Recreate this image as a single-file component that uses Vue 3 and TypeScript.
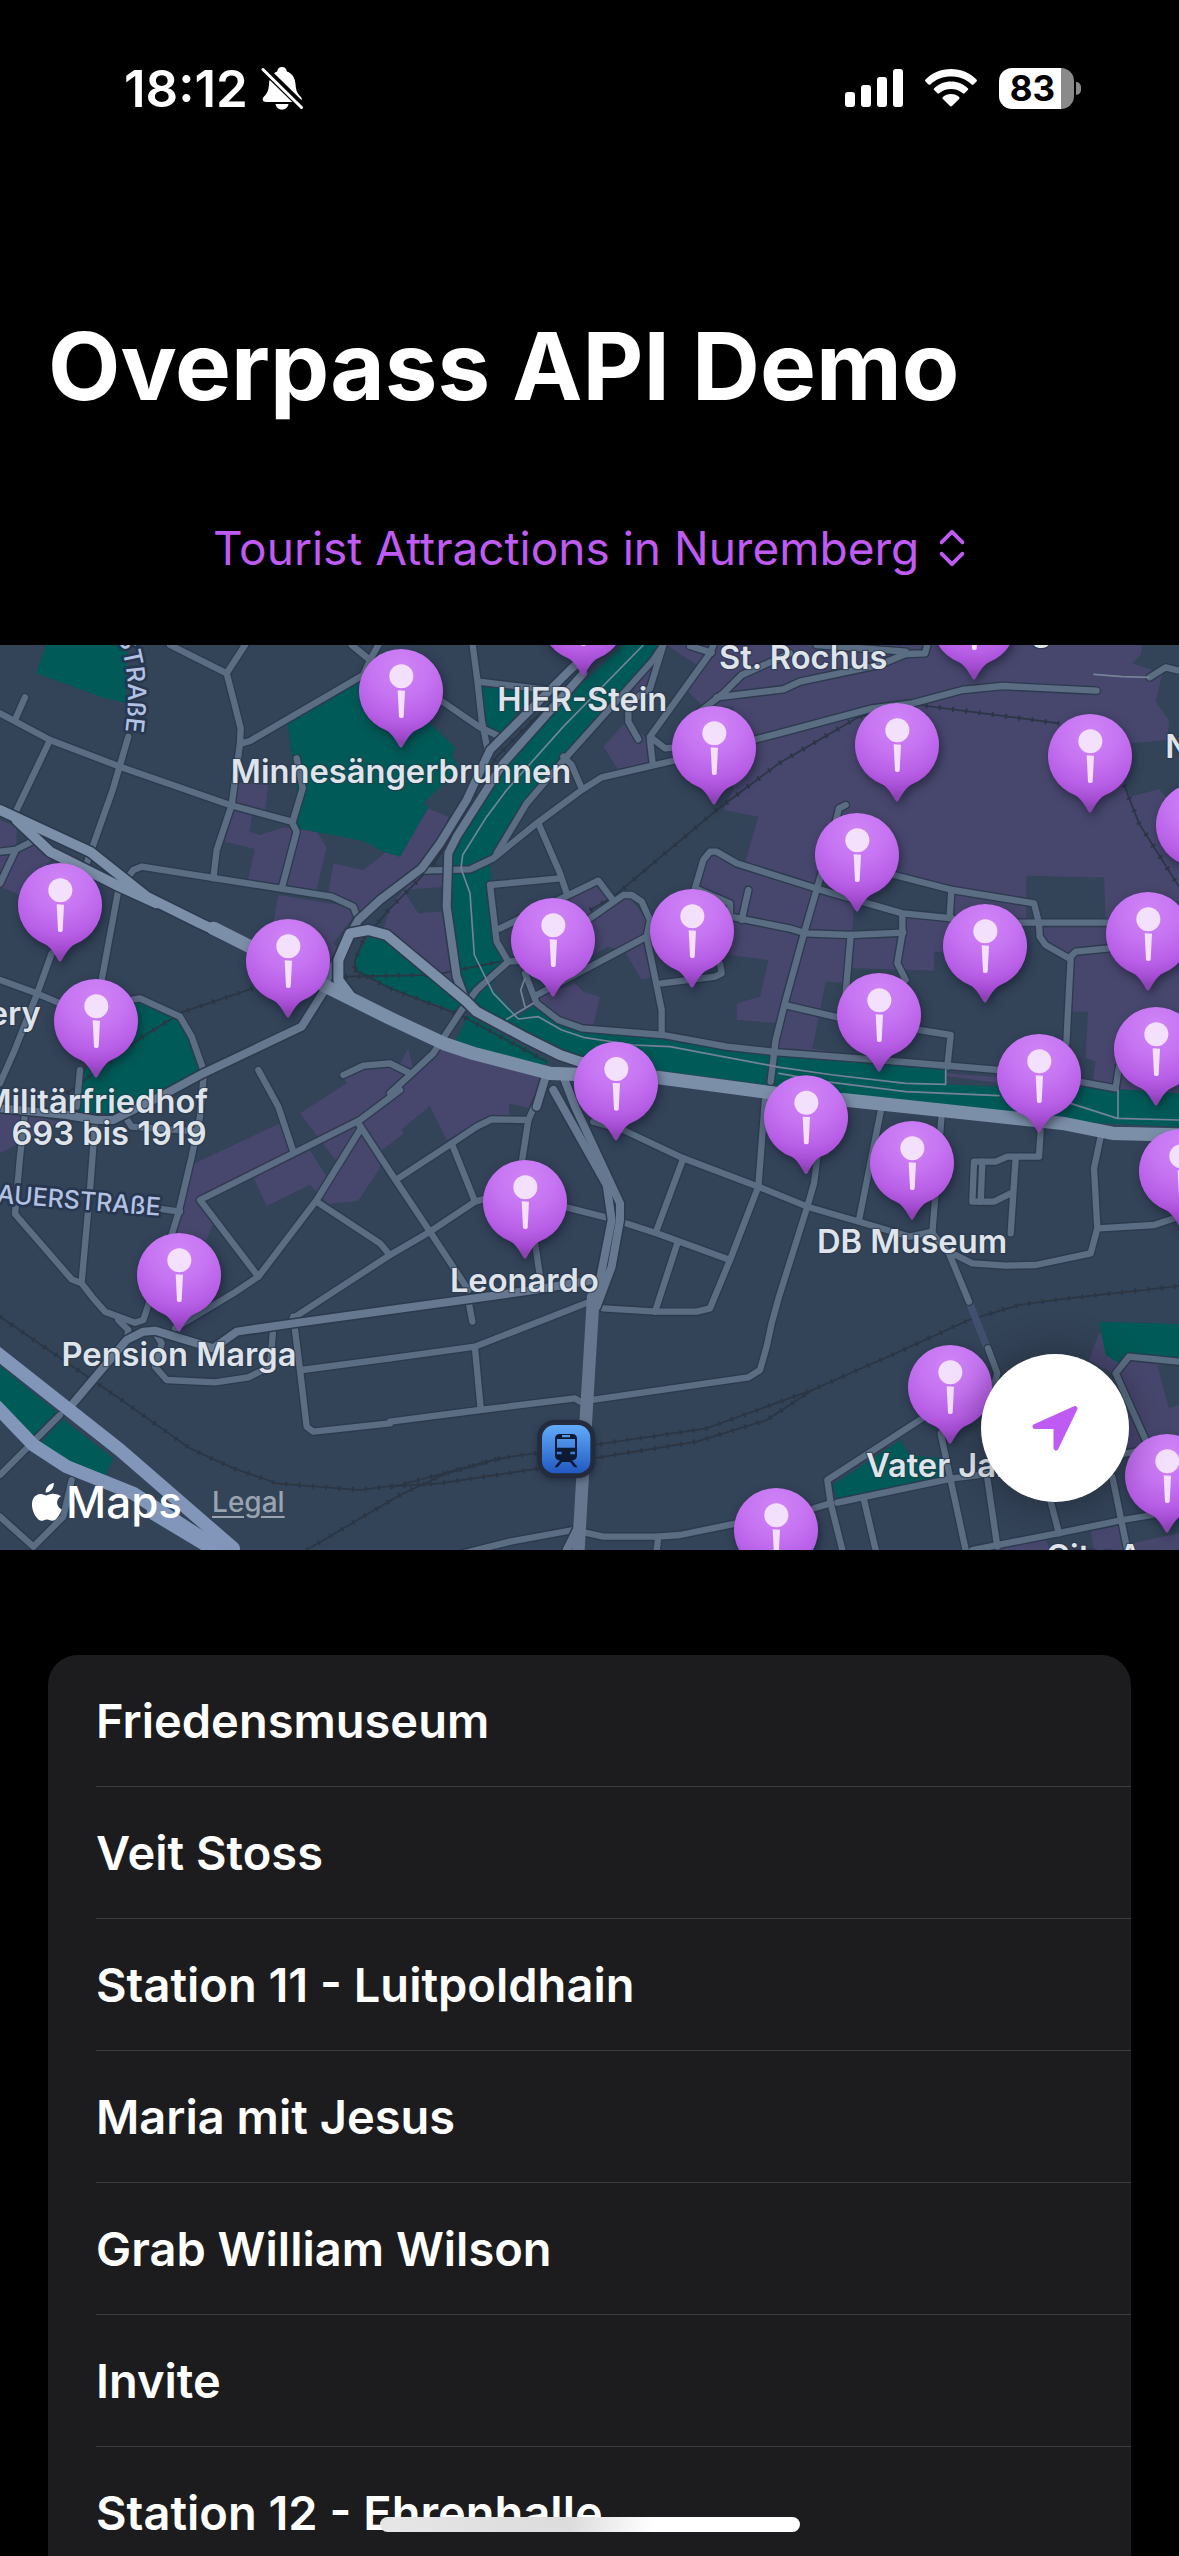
<script setup lang="ts">
import { ref } from 'vue'

interface Tile {
  x: number
  y: number
  paths: string[]
}

interface Label {
  text: string
  x: number
  y: number
  anchor: 'start' | 'middle' | 'end'
}

const categories: string[] = ['Tourist Attractions in Nuremberg']
const category = ref<string>(categories[0])

const places: string[] = [
  'Friedensmuseum',
  'Veit Stoss',
  'Station 11 - Luitpoldhain',
  'Maria mit Jesus',
  'Grab William Wilson',
  'Invite',
  'Station 12 - Ehrenhalle',
]

// Built-up quarters
const districts: string[] = [
  '0,540 50,560 50,620 100,600 160,650 60,765 0,740',
  '714,428 805,435 795,512 755,530 748,575 780,585 850,562 950,575 980,622 948,755 835,740 743,722 765,627 675,605',
  '835,765 1050,800 1060,830 1000,910 1020,930 990,1000 820,850',
  '1000,670 1090,690 1160,635 1200,650 1285,505 1345,530 1320,610 1250,690 1080,850 985,760',
  '1170,800 1210,750 1265,700 1335,700 1345,900 1370,1040 1150,870',
  '900,1420 1040,1330 1030,1310 1090,1275 1200,1270 1225,1225 1240,1290 1300,1250 1340,1200 1640,1300 1590,1405 1527,1390 1527,1430 1480,1430 1340,1500 1290,1398 1205,1468 1212,1480 1140,1535 1140,1585 1075,1682 985,1692 930,1635 800,1698 760,1612 930,1530 980,1610 1010,1565',
  '580,1572 840,1450 870,1540 600,1680 640,1750 620,1800 520,1790',
  '0,1420 90,1425 180,1445 0,1540',
  '2000,15 2090,75 2065,155 2105,195 2200,200 2200,450 2170,510 2275,530 2235,670 2130,635 2100,680 2085,750 2200,790 2190,945 2305,960 2280,1070 2210,1090 2210,1140 2330,1150 2320,1240 3537,1400 3537,15',
  '1810,320 1875,248 1950,300 1960,370 1855,390',
  '1910,120 1980,50 1960,150 1885,230',
  '1690,780 1795,720 1835,780 1770,835',
  '1770,840 1885,765 1940,840 1940,890 1960,1010 1925,1020 1875,935 1825,920 1730,970',
  '1725,1030 1750,1055 1800,1070 1780,1155 1740,1160 1660,1125 1610,1075',
  '3297,2080 3267,2160 3337,2200 3387,2440 3427,2410 3537,2400 3537,2170',
  '3272,2675 3362,2655 3382,2730 3282,2730',
  '3397,2710 3537,2680 3537,2730 3397,2730',
  '2997,2725 3137,2700 3152,2730 2997,2730',
]

// Open blocks inside the quarters
const blocks: string[] = [
  '1210,750 1255,820 1340,812 1335,740',
  '3427,15 3422,45 3397,70 3487,100 3467,185 3507,240 3502,300 3395,310 3372,440 3392,470 3477,447 3537,520 3537,15',
  '3079,707 3312,713 3317,850 3079,850',
  '2802,935 2837,935 3077,850 3117,850 3127,910 3207,960 3217,1115 3264,1115 3257,1255 3287,1265 3277,1330 2837,1300 2437,1225 2477,1025 2547,1030 2552,985 2802,992',
  '2697,710 2847,750 2842,830 2707,815 2557,785 2472,745 2467,720',
  '2562,790 2702,820 2702,880 2557,870',
  '3472,2175 3537,2175 3537,2295 3507,2305',
]

const parks: string[] = [
  '137,15 109,100 310,173 378,188 385,15',
  '863,250 1090,120 1200,100 1290,250 1367,325 1355,345 1378,385 1270,490 1285,500 1200,650 1150,635 1090,603 890,565 888,450',
  '390,1085 415,1080 540,1130 612,1300 470,1370 380,1425 230,1415 250,1290 330,1230',
  '1870,15 1990,15 1670,380 1480,640 1470,680 1490,900 1525,965 1470,1040 1490,1060 1555,1130 1610,1090 1750,1170 1990,1190 2337,1245 2837,1290 2837,1333 3000,1340 3247,1340 3537,1360 3537,1460 3200,1445 2900,1400 2500,1360 1970,1290 1740,1250 1430,1100 1380,1020 1340,800 1345,650 1470,450 1620,250',
  '1110,885 1170,880 1400,1100 1370,1115 1170,1045 1070,990 1065,950',
  '1405,1125 1650,1265 1600,1290 1365,1205',
  '1445,140 1600,155 1500,290 1445,250',
  '3297,2045 3537,2052 3537,2170 3387,2150 3357,2170 3317,2145',
  '2497,2535 2702,2400 2727,2445 2827,2455 2842,2515 2512,2580',
  '0,2178 170,2315 100,2390 0,2295',
  '188,2338 340,2455 310,2520 120,2410',
]

const streets: Tile[] = [
  {
    x: 0,
    y: 0,
    paths: [
      'M0,220 L150,300 360,380 690,495 875,545 890,575 845,745',
      'M45,240 L75,172',
      'M150,300 L45,520',
      'M385,290 L338,450 260,670',
      'M355,750 L305,1020',
      'M155,940 L110,1065 40,1240 0,1330',
      'M0,1020 L110,1060 180,1090',
      'M510,15 L680,100 735,15',
      'M680,100 L722,265 720,310 695,495 650,630 640,715',
      'M725,310 L750,303 1090,105 1110,60 1055,15',
      'M1110,60 L1135,15',
      'M890,355 L908,445 878,545',
      'M385,710 L400,690 425,680 995,770 1060,800 1075,840',
      'M0,635 L45,630 105,600',
      'M45,635 L0,730',
      'M390,1080 L420,1075 540,1130 575,1190 612,1295 600,1430 575,1550 535,1720 510,1800 440,2010 430,2040 405,2048 315,2015 280,1975 245,1930 215,1918 45,1722 60,1550 75,1420',
      'M240,1290 L230,1400',
      'M775,1290 L835,1400 880,1535',
      'M1030,1305 L1090,1277 1170,1270 1230,1300',
    ],
  },
  {
    x: 1170,
    y: 0,
    paths: [
      'M248,15 L262,120 275,240 295,340',
      'M265,125 L460,148',
      'M150,180 L270,262 330,290',
      'M820,15 L790,60 530,350 410,490 350,590 320,640',
      'M820,15 L780,145 715,190 715,245 745,298',
      'M95,692 L240,688 310,655 440,550 575,450 635,412 860,360',
      'M520,350 L545,375 575,445',
      'M970,15 L960,40 780,290 825,325 860,322',
      'M780,300 L788,370',
      'M900,18 L965,38',
      'M930,215 L1000,160 1055,105 1200,40',
      'M980,172 L1180,148 1230,125 1467,75 1547,42 1605,40 1612,15',
      'M1280,15 L1547,35',
      'M1097,298 L1167,280 1447,205 1567,190 1717,150 1837,138 2120,152',
      'M445,550 L510,700 530,760',
      'M300,735 L510,715',
      'M300,735 L320,905 355,965 420,960',
      'M330,865 L625,722 665,775',
      'M600,835 L700,765 725,765 755,785 780,840 770,890 815,1110 815,1180',
      'M440,1065 L770,890',
      'M355,965 L260,1050 215,1110 130,1240 60,1305 0,1360',
      'M405,1000 L440,1090 505,1140 575,1165 820,1185 1010,1220 1165,1237 1467,1260 1827,1290',
      'M915,745 L940,660 960,635 980,635 1040,670 1167,710 1277,745 1537,820 1687,835',
      'M915,745 L1020,790 1020,830 1197,865 1247,880 1382,885 1540,878',
      'M1075,750 L1055,840',
      'M815,1030 L975,1010 995,1000 990,970',
    ],
  },
  {
    x: 2337,
    y: 0,
    paths: [
      'M370,825 L370,880 355,970 380,1020',
      'M345,705 L520,750 765,790 780,850 782,890 800,915 870,955 890,935 990,925',
      'M875,955 L862,1210',
      'M720,848 L990,848',
      'M517,750 L512,835',
      'M130,690 L75,880 20,1080 -10,1200 -25,1325',
      'M215,885 L200,1060',
      'M25,1097 L180,1133',
      'M420,1170 L515,1185 505,1280',
      'M200,495 L180,505 170,545',
      'M900,1325 L1010,1345 1020,1280',
      'M1112,112 L1160,82 1200,92',
    ],
  },
  {
    x: 0,
    y: 1350,
    paths: [
      'M285,100 L270,300 245,575',
      'M375,80 L395,110 600,125',
      'M470,355 L540,365',
      'M880,680 L900,840 920,1010 940,1025 1170,1000',
      'M905,840 L1170,805',
      'M878,685 L1170,495',
      'M525,715 L700,610 775,560 600,330 1080,90 1200,0',
      'M775,560 L950,330 1080,120',
      'M950,335 L1140,460 1165,490',
      'M380,750 L385,720 355,690',
      'M470,735 L485,760 465,830 500,870 645,877 745,862 810,830 820,710',
      'M215,1170 L190,1280 100,1370 0,1280',
      'M0,1155 L180,975',
    ],
  },
  {
    x: 1170,
    y: 1350,
    paths: [
      'M20,268 L185,160 260,110 305,88 415,90',
      'M185,160 L255,335',
      'M0,495 L120,425 255,335 290,325',
      'M-95,100 L10,260 120,425 235,600',
      'M235,630 L247,695',
      'M455,0 L415,90 395,220',
      'M520,350 L660,385 800,430 1020,510',
      'M435,460 L450,560',
      'M0,805 L255,770 600,635',
      'M255,775 L272,955',
      'M0,995 L270,960 555,925 570,935 1075,862 1110,840 1130,770 1145,700 1167,620 1252,350 1272,280 1282,200',
      'M640,655 L800,665 920,665 960,655 1020,510 1105,290 1125,30',
      'M795,665 L862,460',
      'M800,420 L880,205',
      'M610,95 L700,120 880,205 1105,290 1252,350 1407,395 1560,440 1627,425',
      'M200,1395 L360,1355 550,1320 640,1340 800,1340 870,1335 1040,1300',
      'M805,1340 L800,1380',
    ],
  },
  {
    x: 2337,
    y: 1350,
    paths: [
      'M305,65 L240,390',
      'M487,85 L460,430 510,490 570,635',
      'M627,775 L655,850 640,900',
      'M500,480 L580,520 680,527 770,525 935,490 955,415 945,235 965,140',
      'M960,415 L1125,405 1200,380',
      'M785,120 L780,200 685,200 650,215 585,215 580,335 645,335 695,310',
      'M710,205 L695,430',
      'M610,215 L605,335',
      'M430,985 L145,1170 155,1240 190,1380',
      'M105,1255 L155,1240',
      'M175,1238 L520,1165 640,1150',
      'M485,1030 L560,1380',
      'M255,1230 L290,1380',
      'M625,1165 L655,1370',
      'M580,1380 L835,1330 1030,1290 1120,1275',
      'M815,1235 L840,1330',
      'M1000,1160 L1045,1380',
      'M1200,815 L1050,800 1010,850 1100,1050',
      'M1030,1092 L1070,1085',
    ],
  },
]

const avenues: string[] = [
  'M0,1405 L200,1425 290,1440 340,1440 480,1370 610,1300 905,1160 980,1040',
  'M980,1020 L1030,920 1075,840 1140,780 1265,685 1320,610 1400,480 1470,330 1710,90 1790,15',
  'M1750,100 L1510,370 1370,590 1345,640 1340,800 1370,1010 1400,1090 1430,1110',
  'M1660,1350 L1820,1635 1835,1740 1790,1970',
  'M1690,1310 L1725,1400 1860,1690 1860,1740 1835,1880 1790,2000',
  'M1640,1300 L1610,1400',
  'M215,2295 L380,2100 430,2075 465,2072 640,2125 710,2075 880,2050 1170,2010 1405,1978 1600,1950 1780,1920',
  'M1735,2660 L1700,2730',
]

const boulevards: string[] = ['M1780,1970 L1760,2300 1735,2730']

const arterials: string[] = [
  'M0,510 L270,635 440,770 600,850 740,915',
  'M50,540 L150,635 360,740 470,790',
  'M1060,1080 L1015,1020 1015,960 1050,880 1105,870 1160,885 1400,1085 1430,1115 1570,1190 1680,1245 1740,1265 1970,1310',
]

const trunks: string[] = [
  'M640,865 L760,925',
  'M970,1035 L1060,1080 1170,1135 1330,1210 1420,1240 1650,1300 1970,1312 2400,1370 2537,1380 3187,1450 3337,1480 3537,1485',
]

const motorways: string[] = [
  'M-10,2138 L360,2430 700,2725',
  'M-10,2300 L100,2415 200,2480 400,2560 600,2690 680,2750',
  'M460,2620 L660,2740',
]

const rails: string[] = [
  'M200,1360 L420,1195 550,1115 760,1045',
  'M1035,1010 L1300,1005 1500,965',
  'M1065,990 L1170,1045 1380,1125 1640,1265',
  'M1065,985 L1065,960 1090,900 1170,805 1260,715 1310,660 1400,500 1490,350 1740,100',
  'M1770,810 L1840,770 2150,510 2337,370 2577,230 2757,195 3177,250',
  'M3372,435 L3417,550 3537,740',
  'M0,2030 L350,2270 570,2425 700,2485 830,2530 1080,2550 1200,2535 1500,2455 1780,2415 2120,2365 2437,2250 2687,2140 2907,2040 3057,1995 3177,1978 3537,1938',
  'M920,2730 L1200,2565 1340,2500 1500,2455',
  'M1170,2540 L1320,2530 1620,2485 1780,2455 2090,2405 2300,2340 2437,2250',
]

const footpaths: string[] = [
  'M1930,15 L1690,260 1520,450 1460,530 1388,645 1383,685 1410,760 1423,945 1480,1060 1555,1137 1615,1130 1685,1170 1750,1192 1900,1215 2010,1220 2340,1282 2500,1305 2717,1330 2837,1333 2837,1290',
  'M2337,1300 L2477,1325 2717,1355 2997,1367',
  'M1575,1015 L1562,1050 1575,1100',
  'M1520,1138 L1600,1090',
  'M3212,1390 L3352,1435 3537,1440',
  'M3354,1350 L3354,1435',
  'M3282,103 L3367,110 3447,112',
]

const labels: Label[] = [
  { text: 'Minnesängerbrunnen', x: 1203, y: 428, anchor: 'middle' },
  { text: 'HIER-Stein', x: 1747, y: 213, anchor: 'middle' },
  { text: 'St. Rochus', x: 2410, y: 86, anchor: 'middle' },
  { text: 'Burg', x: 3155, y: 2, anchor: 'end' },
  { text: 'N', x: 3496, y: 355, anchor: 'start' },
  { text: 'ery', x: 122, y: 1155, anchor: 'end' },
  { text: 'Militärfriedhof', x: 624, y: 1418, anchor: 'end' },
  { text: '693 bis 1919', x: 620, y: 1515, anchor: 'end' },
  { text: 'Pension Marga', x: 537, y: 2179, anchor: 'middle' },
  { text: 'Leonardo', x: 1573, y: 1957, anchor: 'middle' },
  { text: 'DB Museum', x: 2736, y: 1838, anchor: 'middle' },
  { text: 'Vater Jakob', x: 2598, y: 2512, anchor: 'start' },
  { text: 'City A', x: 3138, y: 2785, anchor: 'start' },
]

const pins: [number, number][] = [
  [2922, -51], [1749, -63], [1203, 153], [2691, 315], [2142, 324], [3270, 348],
  [3594, 555], [2571, 645], [180, 795], [2076, 873], [3444, 882], [1659, 900],
  [2955, 918], [864, 963], [2637, 1125], [288, 1143], [3468, 1227], [3117, 1308],
  [1848, 1331], [2418, 1432], [2736, 1569], [3543, 1593], [1575, 1686], [537, 1905],
  [2850, 2241], [3501, 2508], [2328, 2670],
]
</script>

<template>
  <div class="screen">
    <header class="status">
      <div class="status-left">
        <time>18:12</time>
        <svg class="bell" viewBox="0 0 44 44" aria-label="Silent mode">
          <path
            fill="#fff"
            d="M22 1c3 0 4.500 1.800 4.800 4.500C32.500 7.500 35 12 35.500 18c.4 7 2 9.500 5 12.500 2.500 2.600 1 5.500-2 5.500H6c-3 0-4.500-2.900-2-5.500 3-3 4.600-5.500 5-12.500C9.500 12 12 7.500 17.200 5.500 17.500 2.800 19 1 22 1zM15.500 38h13c-.5 3.500-3.200 5.500-6.500 5.500S16 41.500 15.500 38z"
          />
          <path d="M3 2 43 41" stroke="#000" stroke-width="8" />
          <path d="M3 3.500 41.500 41.500" stroke="#fff" stroke-width="3" stroke-linecap="round" />
        </svg>
      </div>
      <div class="status-right">
        <svg class="signal" viewBox="0 0 58 38" aria-label="Signal">
          <g fill="#fff">
            <rect x="0" y="23" width="10" height="15" rx="3" />
            <rect x="16" y="16" width="10" height="22" rx="3" />
            <rect x="32" y="8" width="10" height="30" rx="3" />
            <rect x="48" y="0" width="10" height="38" rx="3" />
          </g>
        </svg>
        <svg class="wifi" viewBox="0 0 52 38" aria-label="Wi-Fi">
          <g fill="#fff">
            <path d="M26 0C36 0 45 4 51.500 10.500c.6.600.6 1.300 0 1.900l-3 3c-.6.600-1.300.600-1.900 0C41 10 34 7.500 26 7.500S11 10 5.400 15.400c-.6.600-1.300.600-1.900 0l-3-3c-.6-.6-.6-1.300 0-1.900C7 4 16 0 26 0z" />
            <path d="M26 12.500c6.600 0 12.500 2.600 16.800 6.700.6.600.6 1.300 0 1.900l-3.200 3.200c-.6.600-1.200.6-1.800 0C34.600 21.500 30.500 20 26 20s-8.600 1.500-11.800 4.300c-.6.600-1.200.6-1.800 0l-3.200-3.200c-.6-.6-.6-1.300 0-1.900 4.300-4.100 10.200-6.700 16.800-6.700z" />
            <path d="M26 25c3.200 0 6 1.200 8.100 3.100.6.600.6 1.200 0 1.800l-7.100 7.200c-.6.600-1.400.6-2 0l-7.100-7.200c-.6-.6-.6-1.200 0-1.800C20 26.200 22.800 25 26 25z" />
          </g>
        </svg>
        <div class="battery">
          <span class="battery-body">83</span>
          <span class="battery-cap"></span>
        </div>
      </div>
    </header>

    <h1 class="title">Overpass API Demo</h1>

    <div class="picker">
      <select v-model="category" aria-label="Category">
        <option v-for="c in categories" :key="c" :value="c">{{ c }}</option>
      </select>
      <svg viewBox="0 0 28 40" aria-hidden="true">
        <path d="M3 14 14 3 25 14M3 26 14 37 25 26" fill="none" stroke="#bf5af2" stroke-width="4" stroke-linecap="round" stroke-linejoin="round" />
      </svg>
    </div>

    <section class="map" aria-label="Map">
      <svg class="canvas" viewBox="0 15 3537 2715" preserveAspectRatio="xMidYMid slice">
        <defs>
          <radialGradient id="pin-fill" gradientUnits="userSpaceOnUse" cx="0" cy="-70" r="225">
            <stop offset="0" stop-color="#cf84f6" />
            <stop offset="0.400" stop-color="#c674f2" />
            <stop offset="0.720" stop-color="#b75ee6" />
            <stop offset="0.900" stop-color="#a34bd0" />
            <stop offset="1" stop-color="#8c43b2" />
          </radialGradient>
          <linearGradient id="station-fill" x1="0" y1="0" x2="0" y2="1">
            <stop offset="0" stop-color="#63abfa" />
            <stop offset="1" stop-color="#2059c2" />
          </linearGradient>
          <path id="street-north" d="M352,-12 Q384,70 384,160 Q384,240 366,340" />
          <path id="street-west" d="M-120,1672 L20,1690 480,1727" />
        </defs>

        <polygon v-for="p in districts" :key="p" :points="p" class="district" />
        <polygon v-for="p in blocks" :key="p" :points="p" class="block" />
        <polygon v-for="p in parks" :key="p" :points="p" class="park" />

        <g class="rail">
          <path v-for="d in rails" :key="d" :d="d" />
        </g>
        <g class="rail ties">
          <path v-for="d in rails" :key="d" :d="d" />
        </g>
        <path class="tunnel" d="M2907,1985 L2962,2125" />

        <g class="casing">
          <g v-for="t in streets" :key="`${t.x}-${t.y}`" :transform="`translate(${t.x} ${t.y})`">
            <path v-for="d in t.paths" :key="d" :d="d" />
          </g>
        </g>
        <g class="street">
          <g v-for="t in streets" :key="`${t.x}-${t.y}`" :transform="`translate(${t.x} ${t.y})`">
            <path v-for="d in t.paths" :key="d" :d="d" />
          </g>
        </g>
        <g class="footpath"><path v-for="d in footpaths" :key="d" :d="d" /></g>
        <g class="casing wide"><path v-for="d in avenues" :key="d" :d="d" /></g>
        <g class="avenue"><path v-for="d in avenues" :key="d" :d="d" /></g>
        <g class="boulevard"><path v-for="d in boulevards" :key="d" :d="d" /></g>
        <g class="casing wider"><path v-for="d in arterials" :key="d" :d="d" /></g>
        <g class="arterial"><path v-for="d in arterials" :key="d" :d="d" /></g>
        <g class="trunk"><path v-for="d in trunks" :key="d" :d="d" /></g>
        <g class="motorway"><path v-for="d in motorways" :key="d" :d="d" /></g>

        <text class="street-name"><textPath href="#street-north">STRAßE</textPath></text>
        <text class="street-name"><textPath href="#street-west" startOffset="100%" text-anchor="end">AUERSTRAßE</textPath></text>

        <text v-for="l in labels" :key="l.text" class="label" :x="l.x" :y="l.y" :text-anchor="l.anchor">{{ l.text }}</text>

        <g class="station" transform="translate(1698 2428)">
          <rect x="-86" y="-88" width="174" height="174" rx="52" fill="#232b3d" />
          <rect x="-72" y="-73" width="145" height="145" rx="38" fill="url(#station-fill)" />
          <path
            fill="#0c1a33"
            fill-rule="evenodd"
            d="M-18-46h36c10 0 15 5 15 14v50c0 9-6 15-14 15h-1l17 21h-10L12 38h-24l-13 16h-10l17-21h-1c-8 0-14-6-14-15v-50c0-9 5-14 15-14zM-12-43v7h24v-7zM-27-31v26h54v-26zM-27 7v8h14V7zM13 7v8h14V7z"
          />
        </g>

        <g v-for="[x, y] in pins" :key="`${x},${y}`" class="pin" :transform="`translate(${x} ${y})`">
          <path
            fill="url(#pin-fill)"
            d="M0-126A126 126 0 0 1 45 117.700C26 127 16 148 5 166Q0 174-5 166C-16 148-26 127-45 117.700A126 126 0 0 1 0-126Z"
          />
          <circle cx="1" cy="-44" r="36" fill="#f3e0fd" />
          <path d="M-10-2 12-1 8 77Q7 81 1 81T-6 77Z" fill="#f3e0fd" />
        </g>
      </svg>

      <div class="attribution">
        <svg viewBox="0 0 30 38" aria-hidden="true">
          <path
            fill="#fff"
            d="M21.800 0c.3 2.600-.8 5-2.300 6.800-1.500 1.700-3.700 2.900-5.800 2.700-.3-2.500.9-4.900 2.300-6.500C17.500 1.300 19.900.1 21.800 0zM28.800 13.200c-2.400 1.500-3.700 3.600-3.700 6.300 0 3 1.700 5.700 4.600 6.900-.8 2.600-2 5-3.600 7.200-1.500 2.200-3 4.100-5.400 4.100-2.300 0-3-1.300-5.700-1.300-2.700 0-3.600 1.300-5.700 1.400-2.300.1-4.100-2.300-5.600-4.500C.600 28.700-1.700 20.700 1.400 15.300c1.500-2.700 4.300-4.400 7.200-4.400 2.300 0 4.400 1.500 5.800 1.500 1.300 0 4-1.800 6.700-1.600 1.200.1 5.300.4 7.700 2.400z"
          />
        </svg>
        <span class="brand">Maps</span>
        <a href="#legal">Legal</a>
      </div>

      <button class="locate" type="button" aria-label="Show my location">
        <svg viewBox="0 0 46 46" aria-hidden="true">
          <path
            fill="#bf5af2"
            stroke="#bf5af2"
            stroke-width="5"
            stroke-linejoin="round"
            d="M3 21.500 43 3.500 24 43V21.500Z"
          />
        </svg>
      </button>
    </section>

    <ul class="list">
      <li v-for="place in places" :key="place">
        <span>{{ place }}</span>
      </li>
    </ul>

    <div class="home-bar"></div>
  </div>
</template>

<style>
html,
body {
  margin: 0;
  background: #000;
}
</style>

<style scoped>
.screen {
  display: flex;
  flex-direction: column;
  height: 100vh;
  overflow: hidden;
  background: #000;
  color: #fff;
  font-family: Inter, 'Liberation Sans', sans-serif;
}

.status {
  flex: none;
  display: flex;
  justify-content: space-between;
  align-items: center;
  height: 176px;
  padding: 0 98px 0 124px;
}
.status-left,
.status-right {
  display: flex;
  align-items: center;
}
.status-left {
  gap: 12px;
  font-size: 51px;
  font-weight: 600;
}
.bell {
  width: 44px;
  height: 44px;
}
.status-right {
  gap: 22px;
}
.signal {
  width: 58px;
  height: 38px;
}
.wifi {
  width: 52px;
  height: 38px;
}
.battery {
  display: flex;
  align-items: center;
  gap: 2px;
}
.battery-body {
  box-sizing: border-box;
  width: 75px;
  height: 41px;
  padding-right: 8px;
  border-radius: 13px;
  background: linear-gradient(90deg, #fff 83%, #8a8a8a 83%);
  color: #000;
  font-size: 35px;
  font-weight: 700;
  line-height: 41px;
  text-align: center;
}
.battery-cap {
  width: 5px;
  height: 13px;
  border-radius: 0 5px 5px 0;
  background: #8a8a8a;
}

.title {
  flex: none;
  margin: 130px 48px 0;
  font-size: 94px;
  font-weight: 700;
  line-height: 120px;
}

.picker {
  flex: none;
  display: flex;
  justify-content: center;
  align-items: center;
  gap: 18px;
  height: 64px;
  margin: 90px 48px 65px;
}
.picker select {
  appearance: none;
  padding: 0;
  border: 0;
  background: transparent;
  color: #bf5af2;
  font-family: inherit;
  font-size: 46px;
  line-height: 64px;
}
.picker svg {
  width: 28px;
  height: 38px;
}

.map {
  flex: none;
  position: relative;
  aspect-ratio: 1179 / 905;
  overflow: hidden;
  background: #334358;
}
.canvas {
  display: block;
  width: 100%;
  height: 100%;
}
.canvas g path {
  stroke-linejoin: round;
}
.district {
  fill: #47466d;
}
.block {
  fill: #334358;
}
.park {
  fill: #005a57;
}
.casing,
.street,
.footpath,
.avenue,
.boulevard,
.arterial,
.trunk,
.motorway,
.rail {
  fill: none;
  stroke-linecap: round;
}
.casing {
  stroke: #2c3a4d;
  stroke-width: 27px;
}
.casing.wide {
  stroke-width: 33px;
}
.casing.wider {
  stroke-width: 39px;
}
.street {
  stroke: #5b6d83;
  stroke-width: 19px;
}
.footpath {
  stroke: #74839a;
  stroke-width: 5px;
}
.avenue {
  stroke: #66788f;
  stroke-width: 24px;
}
.boulevard {
  stroke: #66768f;
  stroke-width: 38px;
}
.arterial {
  stroke: #7c8fa8;
  stroke-width: 30px;
}
.trunk {
  stroke: #7c8fa8;
  stroke-width: 40px;
}
.motorway {
  stroke: #8196b9;
  stroke-width: 40px;
}
.rail {
  stroke: #2b3645;
  stroke-width: 5px;
}
.rail.ties {
  stroke-width: 15px;
  stroke-linecap: butt;
  stroke-dasharray: 6 34;
}
.tunnel {
  stroke: #42506f;
  stroke-width: 22px;
}
.label {
  fill: #dfe4ea;
  font-size: 98px;
  font-weight: 600;
  paint-order: stroke;
  stroke: rgb(40 54 74 / 60%);
  stroke-width: 8px;
}
.street-name {
  fill: #b3c1e3;
  font-size: 75px;
  font-weight: 500;
  paint-order: stroke;
  stroke: #283750;
  stroke-width: 16px;
  stroke-linejoin: round;
}
.pin {
  filter: drop-shadow(6px 12px 14px rgb(10 15 30 / 50%));
}
.station {
  filter: drop-shadow(0 8px 10px rgb(10 15 30 / 40%));
}

.attribution {
  position: absolute;
  left: 32px;
  bottom: 22px;
  display: flex;
  align-items: center;
}
.attribution svg {
  width: 30px;
  height: 38px;
}
.brand {
  margin: 0 30px 0 4px;
  font-size: 44px;
  font-weight: 500;
  line-height: 52px;
}
.attribution a {
  color: #9aa3b0;
  font-size: 28px;
  font-weight: 500;
  text-underline-offset: 4px;
}

.locate {
  position: absolute;
  right: 50px;
  bottom: 48px;
  display: grid;
  place-items: center;
  width: 148px;
  height: 148px;
  padding: 0;
  border: 0;
  border-radius: 50%;
  background: #fff;
  box-shadow: 0 0 40px rgb(0 0 0 / 35%);
}
.locate svg {
  width: 46px;
  height: 46px;
}

.list {
  flex: 1 0 0;
  min-height: 0;
  margin: 105px 48px 0;
  padding: 0;
  overflow: hidden;
  border-radius: 30px 30px 0 0;
  background: #1c1c1e;
  list-style: none;
}
.list li {
  box-sizing: border-box;
  height: 132px;
  margin-left: 48px;
  border-bottom: 1px solid #3d3d41;
  font-size: 47px;
  font-weight: 600;
  line-height: 131px;
}

.home-bar {
  position: fixed;
  left: 50%;
  bottom: 24px;
  width: 420px;
  height: 15px;
  margin-left: -210px;
  border-radius: 8px;
  background: linear-gradient(90deg, #e6e6e6, #dcdcdc 45%, #fff 65%);
}
</style>
